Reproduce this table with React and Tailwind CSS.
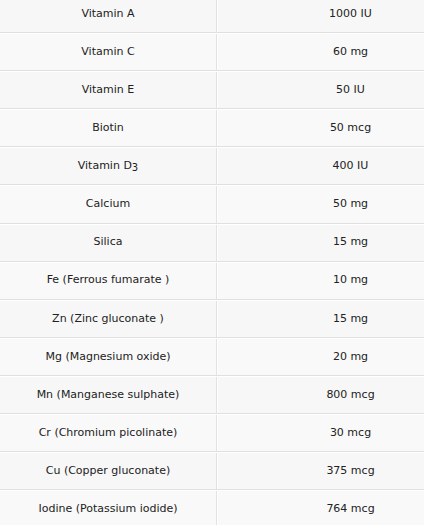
import React from 'react';

const rows = [
  ['Vitamin A', '1000 IU'],
  ['Vitamin C', '60 mg'],
  ['Vitamin E', '50 IU'],
  ['Biotin', '50 mcg'],
  ['D3', '400 IU'],
  ['Calcium', '50 mg'],
  ['Silica', '15 mg'],
  ['Fe (Ferrous fumarate )', '10 mg'],
  ['Zn (Zinc gluconate )', '15 mg'],
  ['Mg (Magnesium oxide)', '20 mg'],
  ['Mn (Manganese sulphate)', '800 mcg'],
  ['Cr (Chromium picolinate)', '30 mcg'],
  ['Cu (Copper gluconate)', '375 mcg'],
  ['Iodine (Potassium iodide)', '764 mcg'],
];

export default function App() {
  return (
    <div className="w-[424px] h-[525px] overflow-hidden bg-white">
      <div className="w-[483px] -mt-[5px] text-[11px] text-[#222]" style={{ fontFamily: '"DejaVu Sans", Verdana, sans-serif' }}>
        {rows.map(([name, amount], i) => (
          <div
            key={i}
            className={`flex h-[38.1px] border-b border-[#e0e0e0] border-t border-t-white ${i % 2 === 0 ? 'bg-[#f7f7f7]' : 'bg-[#f9f9f9]'}`}
          >
            <div className="w-[217px] flex items-center justify-center border-r border-[#e2e2e2]">
              {name === 'D3' ? (
                <span>Vitamin D<sub className="text-[10px] align-baseline relative top-[2px]">3</sub></span>
              ) : (
                name
              )}
            </div>
            <div className="flex-1 flex items-center justify-center border-l border-white">{amount}</div>
          </div>
        ))}
      </div>
    </div>
  );
}
